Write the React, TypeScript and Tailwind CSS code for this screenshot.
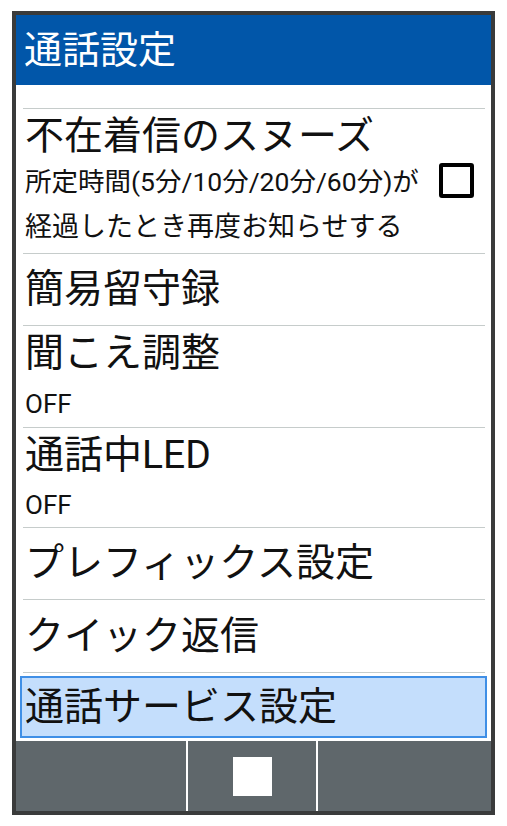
import React from "react"

const font = { fontFamily: 'Roboto, "Noto Sans CJK JP", sans-serif' }

const Divider = () => <div className="h-px bg-[#c6cccb]" />

const App = () => {
  return (
    <div className="w-[507px] h-[826px] bg-white pt-[11px] pl-[12px]" style={font}>
      <div className="w-[483px] h-[804px] border-4 border-[#3a3b3b] bg-white flex flex-col">
        {/* header */}
        <div className="h-[70px] bg-[#0156a9] text-white text-[38px] leading-none pl-[8px] flex items-center">
          通話設定
        </div>

        {/* list */}
        <div className="pl-[7px] pr-[6px] pt-[23px] text-[#111]">
          <Divider />
          <div className="h-[144px] flex flex-col">
            <div className="h-[54px] flex items-center text-[39px] leading-none pl-[2px]">不在着信のスヌーズ</div>
            <div className="h-[38px] flex items-center justify-between pl-[2px] pr-[11px]">
              <span className="text-[26.5px] leading-none">所定時間(5分/10分/20分/60分)が</span>
              <div className="w-[35px] h-[35px] border-4 border-black rounded-[3px] -mt-[4px]" />
            </div>
            <div className="h-[52px] flex items-center text-[27px] leading-none pl-[2px]">経過したとき再度お知らせする</div>
          </div>
          <Divider />
          <div className="h-[71px] flex items-center text-[39px] leading-none pl-[2px]">簡易留守録</div>
          <Divider />
          <div className="h-[101px] flex flex-col">
            <div className="h-[54px] flex items-center text-[39px] leading-none pl-[2px]">聞こえ調整</div>
            <div className="flex-1 flex items-center text-[26px] leading-none pl-[2px]">OFF</div>
          </div>
          <Divider />
          <div className="h-[99px] flex flex-col">
            <div className="h-[54px] flex items-center text-[39px] leading-none pl-[2px]">通話中LED</div>
            <div className="flex-1 flex items-center text-[26px] leading-none pl-[2px]">OFF</div>
          </div>
          <Divider />
          <div className="h-[71px] flex items-center text-[39px] leading-none pl-[2px]">プレフィックス設定</div>
          <Divider />
          <div className="h-[72px] flex items-center text-[39px] leading-none pl-[2px]">クイック返信</div>
          <Divider />
        </div>

        {/* selected row */}
        <div className="mx-[4px] mt-[3px] h-[62px] border-2 border-[#3f8fe6] bg-[#c4defc] flex items-center pl-[3px] text-[39px] leading-none text-[#111]">
          通話サービス設定
        </div>

        {/* soft key bar */}
        <div className="mt-[3px] h-[70px] bg-[#5f676b] flex">
          <div className="w-[172px] border-r-2 border-white" />
          <div className="w-[130px] border-r-2 border-white flex items-center justify-center">
            <div className="w-[39px] h-[39px] bg-white" />
          </div>
          <div className="flex-1" />
        </div>
      </div>
    </div>
  )
}

export default App
